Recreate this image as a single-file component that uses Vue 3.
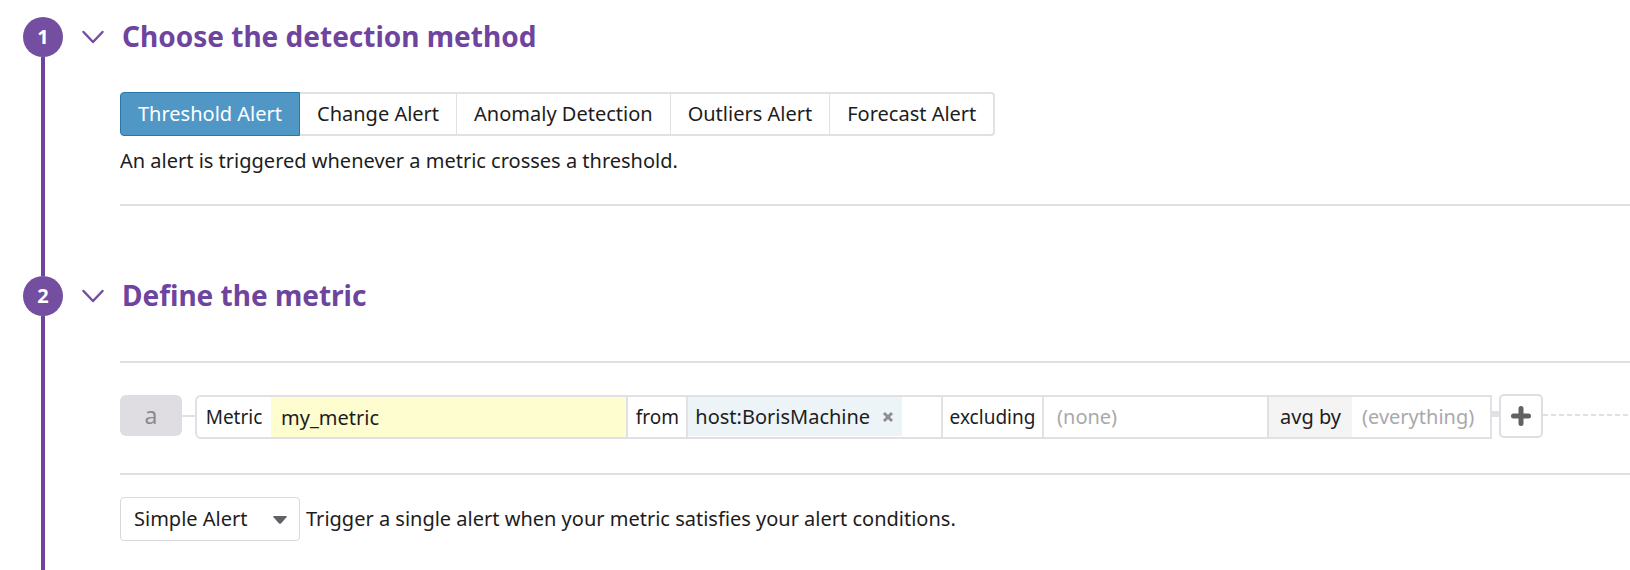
<script setup>
import { ref } from 'vue'

const methods = [
  { name: 'Threshold Alert', help: 'An alert is triggered whenever a metric crosses a threshold.' },
  { name: 'Change Alert', help: 'An alert is triggered whenever the change of a metric crosses a threshold.' },
  { name: 'Anomaly Detection', help: 'An alert is triggered whenever a metric deviates from an expected pattern.' },
  { name: 'Outliers Alert', help: 'An alert is triggered whenever one member of a group behaves differently.' },
  { name: 'Forecast Alert', help: 'An alert is triggered whenever a metric is forecasted to cross a threshold.' },
]
const active = ref(0)
const open = ref([true, true])
const metric = ref('my_metric')
const tags = ref(['host:BorisMachine'])
const excluding = ref('')
const groupBy = ref('')
const alertType = ref('Simple Alert')
</script>

<template>
  <main class="page">
    <section class="step">
      <div class="rail"><span class="num">1</span><span class="line"></span></div>
      <div class="body">
        <header class="head">
          <button class="toggle" type="button" aria-label="Toggle detection method" @click="open[0] = !open[0]">
            <svg width="24" height="16" viewBox="0 0 24 16"><path d="M2.500 3 L12 13 L21.500 3" /></svg>
          </button>
          <h2>Choose the detection method</h2>
        </header>
        <div v-if="open[0]" class="content">
          <div class="tabs" role="group" aria-label="Detection method">
            <button
              v-for="(m, i) in methods"
              :key="m.name"
              type="button"
              class="tab"
              :class="{ active: i === active }"
              :aria-pressed="i === active"
              @click="active = i"
            >{{ m.name }}</button>
          </div>
          <p class="help">{{ methods[active].help }}</p>
          <hr>
        </div>
      </div>
    </section>

    <section class="step last">
      <div class="rail"><span class="num">2</span><span class="line"></span></div>
      <div class="body">
        <header class="head">
          <button class="toggle" type="button" aria-label="Toggle metric definition" @click="open[1] = !open[1]">
            <svg width="24" height="16" viewBox="0 0 24 16"><path d="M2.500 3 L12 13 L21.500 3" /></svg>
          </button>
          <h2>Define the metric</h2>
        </header>
        <div v-if="open[1]" class="content second">
          <hr>
          <div class="row">
            <span class="letter">a</span>
            <span class="link"></span>
            <div class="query">
              <label class="lab metric-lab" for="metric">Metric</label>
              <input id="metric" v-model="metric" class="metric" type="text">
              <label class="lab from" for="from">from</label>
              <div class="scope">
                <span v-for="t in tags" :key="t" class="chip">
                  {{ t }}
                  <button type="button" :aria-label="'Remove ' + t" @click="tags = tags.filter(x => x !== t)">
                    <svg width="12" height="12" viewBox="0 0 12 12"><path d="M2 2 L10 10 M10 2 L2 10" /></svg>
                  </button>
                </span>
                <input id="from" type="text">
              </div>
              <label class="lab excl" for="excl">excluding</label>
              <input id="excl" v-model="excluding" class="none" type="text" placeholder="(none)">
              <label class="lab avg" for="group">avg by</label>
              <input id="group" v-model="groupBy" class="group" type="text" placeholder="(everything)">
            </div>
            <span class="stub"></span>
            <button class="plus" type="button" aria-label="Add function">
              <svg width="20" height="20" viewBox="0 0 20 20"><path d="M10 2.500 V17.500 M2.500 10 H17.500" /></svg>
            </button>
            <span class="dash"></span>
          </div>
          <hr>
          <div class="alert">
            <div class="select">
              <select id="type" v-model="alertType">
                <option>Simple Alert</option>
                <option>Multi Alert</option>
              </select>
              <svg width="14" height="8" viewBox="0 0 14 8"><path d="M1 0 H13 Q14.500 0 13.500 1.200 L8 7.400 Q7 8.300 6 7.400 L0.500 1.200 Q-0.500 0 1 0 Z" /></svg>
            </div>
            <label for="type">Trigger a single alert when your metric satisfies your alert conditions.</label>
          </div>
        </div>
      </div>
    </section>
  </main>
</template>

<style>
body { margin: 0; background: #fff; }
</style>

<style scoped>
* { box-sizing: border-box; }
.page {
  display: flex;
  flex-direction: column;
  min-height: 100vh;
  padding: 17px 0 0 23px;
  font-family: "Noto Sans", sans-serif;
  font-size: 20px;
  line-height: 28px;
  color: #1c1c21;
}
button, input, select { font: inherit; color: inherit; margin: 0; }
button { cursor: pointer; }
input { border: 0; border-radius: 0; outline: 0; min-width: 0; background: transparent; }
input::placeholder { color: #a9a8ad; opacity: 1; }
.step { display: flex; }
.last { flex: 1; }
.rail { display: flex; flex-direction: column; align-items: center; width: 40px; flex: none; }
.num {
  width: 40px;
  height: 40px;
  border-radius: 50%;
  background: #744fa1;
  color: #fff;
  font-weight: 700;
  line-height: 40px;
  text-align: center;
}
.line { flex: 1; width: 4px; background: #6f449c; }
.body { flex: 1; min-width: 0; }
.head { display: flex; align-items: center; height: 40px; padding-left: 18px; }
.toggle { display: flex; width: 24px; padding: 0; border: 0; background: none; }
.toggle path { fill: none; stroke: #744fa1; stroke-width: 2.500; stroke-linecap: round; stroke-linejoin: round; }
h2 { margin: 0 0 0 17px; padding-bottom: 2px; font-size: 28px; line-height: 38px; font-weight: 700; color: #6f449f; }
.content { padding: 35px 0 70px 57px; }
.second { padding: 45px 0 0 57px; }
hr { height: 2px; margin: 0; border: 0; background: #e0e0e2; }
.tabs { display: flex; }
.tab {
  height: 44px;
  padding: 0 17px;
  margin-left: -1px;
  border: 2px solid #e1e0e4;
  border-left-width: 1px;
  border-right-width: 1px;
  background: #fff;
  white-space: nowrap;
}
.tab:first-child { margin-left: 0; border-radius: 4px 0 0 4px; }
.tab:last-child { border-right-width: 2px; border-radius: 0 4px 4px 0; }
.tab.active { position: relative; background: #5097c6; border: 1px solid #2a78aa; color: #fff; }
.help { margin: 11px 0 29px; }
.row { display: flex; align-items: flex-start; padding: 32px 0 34px; }
.letter { width: 62px; height: 41px; border-radius: 6px; background: #dfdde2; color: #8c8a90; font-size: 23px; line-height: 40px; text-align: center; }
.link { width: 13px; height: 2px; margin-top: 20px; background: #e1e0e4; }
.query { display: flex; flex: 1; min-width: 0; height: 44px; border: 2px solid #e1e0e4; border-radius: 6px 0 0 6px; }
.lab { flex: none; font-size: 19px; line-height: 40px; text-align: center; }
.metric-lab { width: 74px; }
.metric { flex: 337 1 0; padding: 2px 10px 0; background: #fefdd0; }
.from { width: 62px; border: solid #e1e0e4; border-width: 0 2px; }
.scope { display: flex; flex: 254 1 0; min-width: 0; }
.scope input { flex: 1; width: 0; padding: 0; }
.chip { display: flex; align-items: center; height: 39px; padding: 0 8px 0 7px; background: #ecf4f8; }
.chip button { display: flex; margin-left: 12px; padding: 0; border: 0; background: none; }
.chip path { stroke: #8f8e93; stroke-width: 3; }
.excl { width: 103px; border: solid #e1e0e4; border-width: 0 2px; }
.none { flex: 198 1 0; padding: 0 13px; }
.avg { width: 85px; font-size: 20px; border-left: 2px solid #e1e0e4; background: #f4f4f5; }
.group { width: 138px; padding: 0 10px; }
.stub { width: 7px; height: 6px; margin-top: 16px; background: #e1e0e4; }
.plus { display: flex; align-items: center; justify-content: center; width: 44px; height: 44px; margin-top: -1px; padding: 0; border: 2px solid #dfdee2; border-radius: 5px; background: #fff; }
.plus path { stroke: #626165; stroke-width: 5; stroke-linecap: round; }
.dash { width: 87px; height: 2px; margin-top: 19px; background: repeating-linear-gradient(90deg, #e1e0e4 0 5px, transparent 5px 8px); }
.alert { display: flex; align-items: center; gap: 6px; padding-top: 22px; }
.select { position: relative; width: 180px; }
.select select { display: block; width: 100%; height: 44px; padding: 0 13px; border: 1px solid #d9d8dd; border-radius: 4px; background: #fff; appearance: none; }
.select svg { position: absolute; right: 13px; top: 19px; pointer-events: none; fill: #626165; }
</style>
